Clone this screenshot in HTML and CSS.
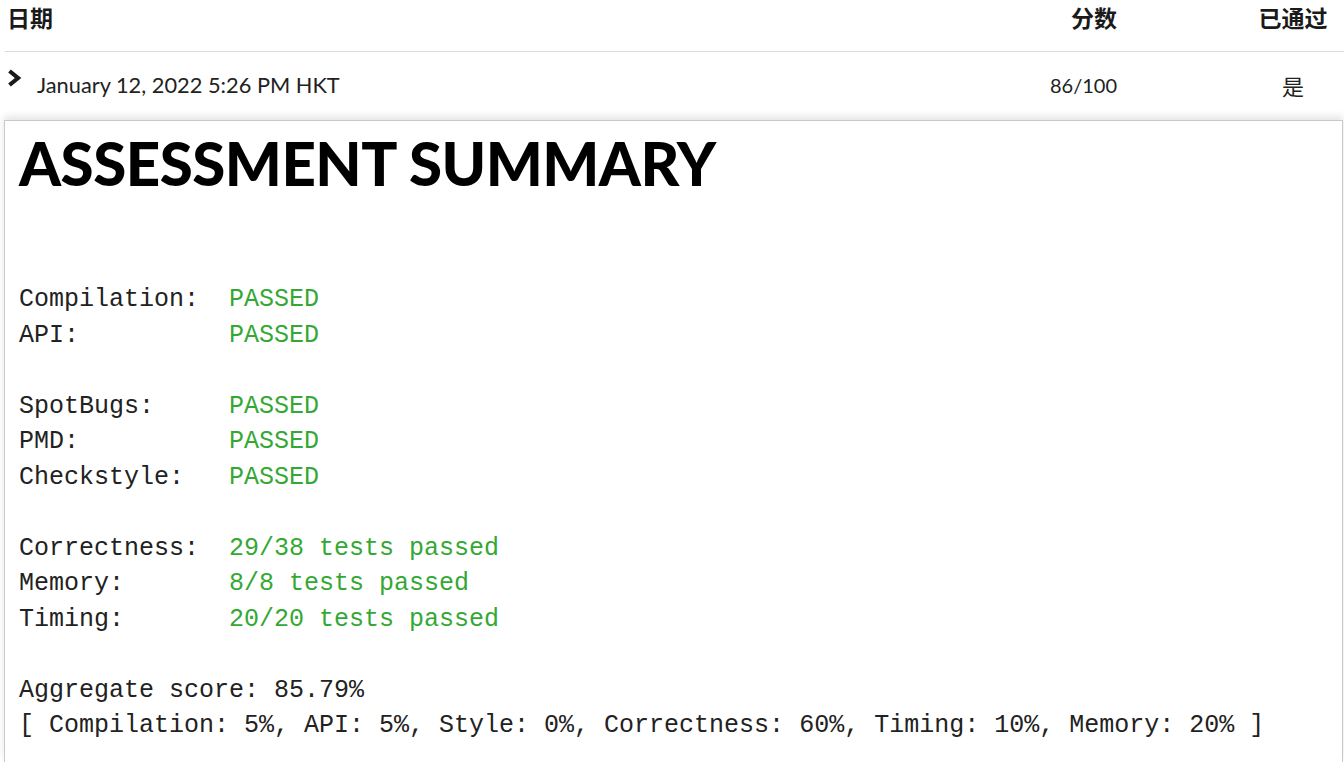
FILE: index.html
```html
<!DOCTYPE html>
<html lang="zh">
<head>
<meta charset="utf-8">
<title>Assessment</title>
<link rel="stylesheet" href="styles.css">
</head>
<body>
<div class="table">
  <div class="row head">
    <div class="c1">日期</div>
    <div class="c2">分数</div>
    <div class="c3">已通过</div>
  </div>
  <div class="row data">
    <div class="c1">
      <svg class="chev" width="15" height="19" viewBox="0 0 15 19"><polyline points="2.5,2 11,9 2.5,16" fill="none" stroke="#1a1a1a" stroke-width="4.2" stroke-linejoin="miter"/></svg>
      <span class="date">January 12, 2022 5:26 PM HKT</span>
    </div>
    <div class="c2">86/100</div>
    <div class="c3">是</div>
  </div>
</div>
<div class="box">
  <h1 class="title">ASSESSMENT SUMMARY</h1>
<pre class="report">Compilation:  <span class="ok">PASSED</span>
API:          <span class="ok">PASSED</span>

SpotBugs:     <span class="ok">PASSED</span>
PMD:          <span class="ok">PASSED</span>
Checkstyle:   <span class="ok">PASSED</span>

Correctness:  <span class="ok">29/38 tests passed</span>
Memory:       <span class="ok">8/8 tests passed</span>
Timing:       <span class="ok">20/20 tests passed</span>

Aggregate score: 85.79%
[ Compilation: 5%, API: 5%, Style: 0%, Correctness: 60%, Timing: 10%, Memory: 20% ]</pre>
</div>
</body>
</html>
```

FILE: styles.css
```css
html, body {
  margin: 0;
  padding: 0;
  background: #ffffff;
  overflow: hidden;
}
body {
  width: 1344px;
  height: 762px;
  font-family: "Lato", "Noto Sans CJK SC", sans-serif;
  color: #2d3b45;
}
.table {
  margin-left: 5px;
}
.row {
  display: grid;
  grid-template-columns: 1fr 120px 72px;
  column-gap: 140px;
  padding: 0 15px 0 3px;
}
.head {
  height: 51px;
  border-bottom: 1px solid #dcdcdc;
  font-weight: 700;
  font-size: 23px;
  color: #1a1a1a;
  line-height: 34px;
  font-family: "Noto Sans CJK SC", sans-serif;
}
.head .c1 { margin-left: -1px; }
.c2 { text-align: right; }
.c3 { text-align: center; }
.data {
  height: 66px;
  font-size: 21.8px;
  color: #222;
  line-height: 66px;
}
.data .c1 {
  display: flex;
  align-items: center;
}
.chev {
  flex: none;
  margin-left: -1px;
  margin-right: 15px;
  position: relative;
  top: -7px;
}
.data .c2 { font-size: 20px; }
.data .c3 { font-family: "Noto Sans CJK SC", sans-serif; font-weight: 400; font-size: 22px; }
.box {
  box-sizing: border-box;
  margin-left: 4px;
  margin-right: 1px;
  margin-top: 2px;
  height: 642px;
  border: 1px solid #c9c9c9;
  border-bottom: none;
  box-shadow: 0 -4px 7px rgba(0, 0, 0, 0.10);
  background: #fff;
  padding: 12px 0 0 14px;
}
.title {
  margin: 0;
  font-family: "Lato", sans-serif;
  font-weight: 900;
  font-size: 60px;
  line-height: 60px;
  color: #000;
  letter-spacing: -0.5px;
}
.report {
  margin: 89px 0 0 0;
  font-family: "Liberation Mono", monospace;
  font-size: 25px;
  line-height: 35.5px;
  color: #222;
}
.ok {
  color: #34a834;
}
```
